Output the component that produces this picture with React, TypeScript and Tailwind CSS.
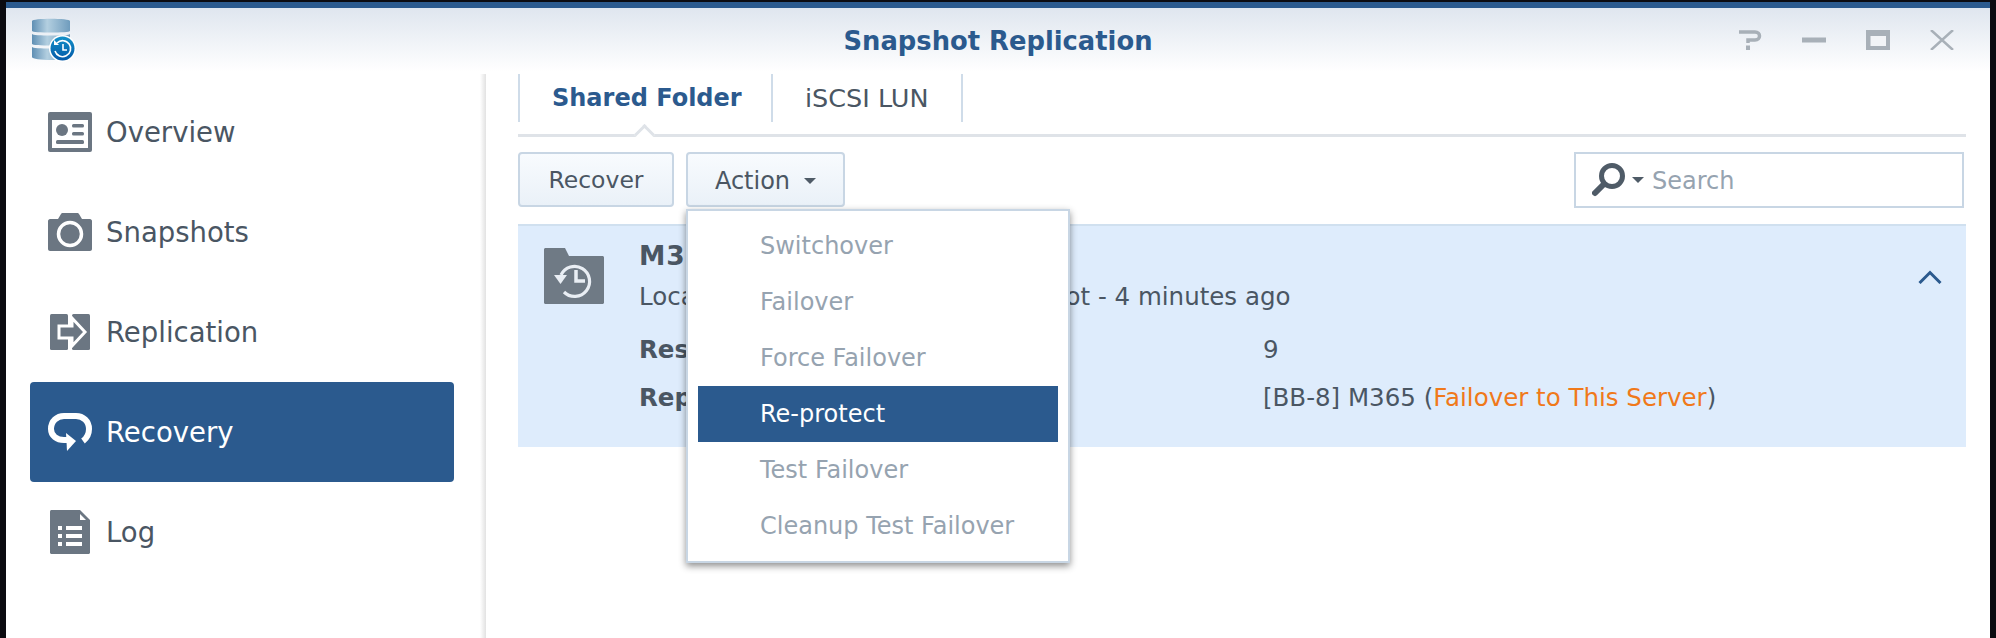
const navItems = [
  { label: "Overview", icon: <OverviewIcon /> },
  { label: "Snapshots", icon: <CameraIcon /> },
  { label: "Replication", icon: <ReplicationIcon /> },
  { label: "Recovery", icon: <RecoveryIcon />, active: true },
  { label: "Log", icon: <LogIcon /> },
];

const menuItems = ["Switchover", "Failover", "Force Failover", "Re-protect", "Test Failover", "Cleanup Test Failover"];

function AppLogo() {
  return (
    <svg width="46" height="46" viewBox="0 0 46 46">
      <defs>
        <linearGradient id="cyl" x1="0" x2="1" y1="0" y2="0">
          <stop offset="0" stopColor="#5f8fb4" />
          <stop offset="0.4" stopColor="#b3cfe0" />
          <stop offset="1" stopColor="#6f9cbd" />
        </linearGradient>
        <linearGradient id="badge" x1="0" x2="0" y1="0" y2="1">
          <stop offset="0" stopColor="#1390c8" />
          <stop offset="1" stopColor="#0459a8" />
        </linearGradient>
      </defs>
      <path d="M0 3C0 0 38 0 38 3V13C38 15 0 15 0 13Z" fill="url(#cyl)" />
      <path d="M0 16C0 18 38 18 38 16V26C38 28 0 28 0 26Z" fill="url(#cyl)" />
      <path d="M0 29C0 31 38 31 38 29V39C38 43 0 43 0 39Z" fill="url(#cyl)" />
      <circle cx="30.5" cy="30.5" r="13.5" fill="#fff" />
      <circle cx="30.5" cy="30.5" r="12" fill="url(#badge)" />
      <path d="M25 25A8 8 0 1 1 23 33" fill="none" stroke="#fff" strokeWidth="1.6" />
      <path d="M22 22V27H27Z" fill="#fff" />
      <path d="M31 26V32H35" fill="none" stroke="#fff" strokeWidth="1.6" />
    </svg>
  );
}

function OverviewIcon() {
  return (
    <svg width="44" height="40" viewBox="0 0 44 40">
      <rect width="44" height="40" rx="2" fill="#6b7682" />
      <rect x="4" y="8" width="36" height="28" fill="#fff" />
      <circle cx="14" cy="18" r="6" fill="#6b7682" />
      <rect x="24" y="12" width="12" height="3.5" rx="1.5" fill="#6b7682" />
      <rect x="24" y="20" width="12" height="3.5" rx="1.5" fill="#6b7682" />
      <rect x="8" y="28" width="28" height="4" rx="1.5" fill="#6b7682" />
    </svg>
  );
}

function CameraIcon() {
  return (
    <svg width="44" height="38" viewBox="0 0 44 38">
      <path d="M2 6H10L13 1C13.4 0.4 14 0 15 0H29C30 0 30.6 0.4 31 1L34 6H42C43 6 44 7 44 8V36C44 37 43 38 42 38H2C1 38 0 37 0 36V8C0 7 1 6 2 6Z" fill="#6b7682" />
      <circle cx="22" cy="21" r="11.5" fill="#6b7682" stroke="#fff" strokeWidth="3.5" />
    </svg>
  );
}

function ReplicationIcon() {
  return (
    <svg width="40" height="36" viewBox="0 0 40 36">
      <rect width="18" height="36" rx="1.5" fill="#6b7682" />
      <rect x="22" width="18" height="36" rx="1.5" fill="#6b7682" />
      <path d="M9 12H22V4L35 18L22 32V24H9Z" fill="#6b7682" stroke="#fff" strokeWidth="3" />
    </svg>
  );
}

function RecoveryIcon() {
  return (
    <svg width="44" height="38" viewBox="0 0 44 38">
      <path d="M35 28C39 25 41 21 41 16C41 8 35 3 28 3H16C9 3 3 8 3 16C3 23 9 27 16 27H20" fill="none" stroke="#fff" strokeWidth="6" />
      <path d="M18 20L28 28L19 38Z" fill="#fff" />
    </svg>
  );
}

function LogIcon() {
  return (
    <svg width="40" height="44" viewBox="0 0 40 44">
      <path d="M1.5 0H30L40 10V42.5C40 43.3 39.3 44 38.5 44H1.5C0.7 44 0 43.3 0 42.5V1.5C0 0.7 0.7 0 1.5 0Z" fill="#6b7682" />
      <path d="M30 4L36 10H30Z" fill="#fff" />
      <rect x="8" y="16" width="4" height="4" fill="#fff" />
      <rect x="16" y="16" width="16" height="4" fill="#fff" />
      <rect x="8" y="24" width="4" height="4" fill="#fff" />
      <rect x="16" y="24" width="16" height="4" fill="#fff" />
      <rect x="8" y="32" width="4" height="4" fill="#fff" />
      <rect x="16" y="32" width="16" height="4" fill="#fff" />
    </svg>
  );
}

function FolderIcon() {
  return (
    <svg width="60" height="56" viewBox="0 0 60 56">
      <path d="M1.5 0H21L25 8H58.5C59.3 8 60 8.7 60 9.5V54.5C60 55.3 59.3 56 58.5 56H1.5C0.7 56 0 55.3 0 54.5V1.5C0 0.7 0.7 0 1.5 0Z" fill="#6f7a85" />
      <path d="M17 27A15 15 0 1 1 20 44" fill="none" stroke="#e9eef4" strokeWidth="3.2" />
      <path d="M10 27H23L16.5 36Z" fill="#e9eef4" />
      <path d="M32 22V33H41" fill="none" stroke="#e9eef4" strokeWidth="3.5" />
    </svg>
  );
}

function WindowControls() {
  return (
    <div className="flex items-center gap-[40px] pr-[36px]">
      <svg width="24" height="20" viewBox="0 0 24 20">
        <path d="M1 2H17C23 2 23 10 17 10H10V13" fill="none" stroke="#a8b0b8" strokeWidth="3.5" />
        <rect x="8" y="15.5" width="4" height="4.5" fill="#a8b0b8" />
      </svg>
      <svg width="24" height="6" viewBox="0 0 24 6">
        <rect width="24" height="5" y="0.5" fill="#a8b0b8" />
      </svg>
      <svg width="24" height="20" viewBox="0 0 24 20">
        <rect width="24" height="20" fill="#a8b0b8" />
        <rect x="4.5" y="6" width="15.5" height="10" fill="#f2f4f7" />
      </svg>
      <svg width="24" height="20" viewBox="0 0 24 20">
        <path d="M1 0L23 20M23 0L1 20" stroke="#a8b0b8" strokeWidth="2.5" fill="none" />
      </svg>
    </div>
  );
}

function Caret({ className }: { className: string }) {
  return <span className={`w-0 h-0 border-x-[6px] border-x-transparent border-t-[6px] ${className}`} />;
}

export default function App() {
  return (
    <div
      className="w-[1996px] h-[638px] bg-[#0b0b10] pt-[2px] px-[6px] overflow-hidden text-[#4a5663]"
      style={{ fontFamily: '"DejaVu Sans", Verdana, sans-serif' }}
    >
      <div className="h-[636px] bg-white border-t-[6px] border-[#2b5a8e] flex flex-col">
        <div className="h-[64px] shrink-0 flex items-center bg-gradient-to-b from-[#dfe6ef] to-white">
          <div className="flex-1">
            <div className="ml-[26px] mt-[1px] w-[46px]">
              <AppLogo />
            </div>
          </div>
          <div className="pt-[3px] text-[25.8px] font-bold text-[#2b5a8e]">Snapshot Replication</div>
          <div className="flex-1 flex justify-end">
            <WindowControls />
          </div>
        </div>

        <div className="flex-1 flex min-h-0">
          <div className="w-[474px] shrink-0 pt-[10px] pl-[24px] pr-[26px]">
            {navItems.map((item) => (
              <div
                key={item.label}
                className={`h-[100px] flex items-center rounded-[4px] pl-[18px] ${item.active ? "bg-[#2b5a8e] text-white" : ""}`}
              >
                <span className="w-[44px] flex justify-center">{item.icon}</span>
                <span className="ml-[14px] pt-[1px] text-[27.5px]">{item.label}</span>
              </div>
            ))}
          </div>
          <div className="w-[6px] mt-[2px] bg-gradient-to-r from-white to-[#e2e2e2]" />

          <div className="flex-1 pl-[32px] pr-[24px] pt-[2px] relative">
            <div className="h-[63px] border-b-[3px] border-[#dfe3e8] relative">
              <div className="h-[48px] flex text-[24px]">
                <div className="w-[255px] border-x-2 border-[#cfdce9] flex items-center pl-[32px] font-bold text-[#2b5a8e]">Shared Folder</div>
                <div className="w-[190px] border-r-2 border-[#cfdce9] flex items-center pl-[32px] text-[25.5px]">iSCSI LUN</div>
              </div>
              <span className="absolute left-[119px] top-[53px] w-[15px] h-[15px] bg-white border-l-[3px] border-t-[3px] border-[#dfe3e8] rotate-45" />
            </div>

            <div className="mt-[15px] flex justify-between items-start text-[24px]">
              <div className="flex gap-[12px]">
                <div className="w-[156px] h-[55px] pt-[2px] border-2 border-[#c8d6e4] rounded-[4px] bg-gradient-to-b from-[#f8fbfe] to-[#eaf1f8] flex items-center justify-center text-[23.5px]">Recover</div>
                <div className="w-[159px] h-[55px] pt-[2px] border-2 border-[#c8d6e4] rounded-[4px] bg-gradient-to-b from-[#f8fbfe] to-[#eaf1f8] flex items-center justify-center gap-[14px]">
                  Action
                  <Caret className="border-t-[#4f5b67]" />
                </div>
              </div>
              <div className="w-[390px] h-[56px] mr-[2px] border-2 border-[#c8d6e4] flex items-center pl-[16px]">
                <svg width="34" height="34" viewBox="0 0 34 34">
                  <circle cx="20" cy="13" r="10.5" fill="none" stroke="#4f5b67" strokeWidth="5" />
                  <path d="M12 21L3 30" stroke="#4f5b67" strokeWidth="6" strokeLinecap="round" />
                </svg>
                <Caret className="ml-[6px] border-t-[#4f5b67]" />
                <span className="ml-[8px] pt-[1px] text-[#96a3b0]">Search</span>
              </div>
            </div>

            <div className="mt-[16px] h-[223px] bg-[#deecfc] border-t-2 border-[#d0e0ef] flex justify-between pl-[26px] pr-[24px] text-[24.5px]">
              <div className="flex">
                <div className="pt-[22px]">
                  <FolderIcon />
                </div>
                <div className="ml-[35px] pt-[15px] text-nowrap">
                  <div className="h-[30px] flex items-center text-[26.5px] font-bold tracking-[1px]">M365</div>
                  <div className="h-[30px] mt-[11px] flex items-center">Local Snapshots 12, Latest Snapshot - 4 minutes ago</div>
                  <div className="h-[30px] mt-[23px] flex items-center">
                    <span className="w-[624px] font-bold">Restorable Snapshots</span>
                    <span>9</span>
                  </div>
                  <div className="h-[30px] mt-[18px] flex items-center">
                    <span className="w-[624px] font-bold">Replication Source</span>
                    <span>
                      [BB-8] M365 (<span className="text-[#f0791a]">Failover to This Server</span>)
                    </span>
                  </div>
                </div>
              </div>
              <div className="pt-[44px]">
                <svg width="24" height="14" viewBox="0 0 24 14">
                  <path d="M1.5 13L12 2.5L22.5 13" fill="none" stroke="#2b5a8e" strokeWidth="3" />
                </svg>
              </div>
            </div>

            {/* dropdown opened from the Action button */}
            <div className="absolute left-[200px] top-[137px] w-[384px] h-[354px] bg-white border-2 border-[#c8d6e4] shadow-[0_3px_7px_rgba(0,0,0,0.45)] pt-[7px] px-[10px] text-[24px]">
              {menuItems.map((label) =>
                label === "Re-protect" ? (
                  <div key={label} className="h-[56px] flex items-center pl-[62px] bg-[#2b5a8e] text-white">{label}</div>
                ) : (
                  <div key={label} className="h-[56px] flex items-center pl-[62px] text-[#96a3b0]">{label}</div>
                )
              )}
            </div>
          </div>
        </div>
      </div>
    </div>
  );
}
